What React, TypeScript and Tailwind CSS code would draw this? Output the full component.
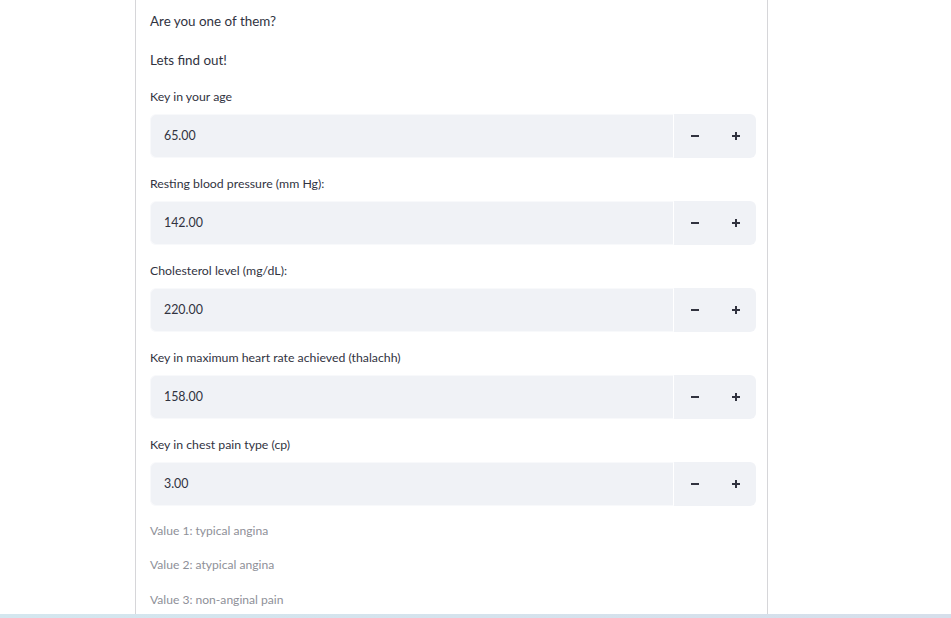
const fields = [
  { label: "Key in your age", value: "65.00" },
  { label: "Resting blood pressure (mm Hg):", value: "142.00" },
  { label: "Cholesterol level (mg/dL):", value: "220.00" },
  { label: "Key in maximum heart rate achieved (thalachh)", value: "158.00" },
  { label: "Key in chest pain type (cp)", value: "3.00" },
];

const notes = [
  "Value 1: typical angina",
  "Value 2: atypical angina",
  "Value 3: non-anginal pain",
];

function NumberField({ label, value }: { label: string; value: string }) {
  return (
    <div className="flex flex-col">
      <div className="h-[22px] flex items-center text-[12.3px] text-[#31333f]">{label}</div>
      <div className="mt-[6px] h-[44px] flex">
        <div className="flex-1 flex items-center rounded-l-md bg-[#f0f2f6] border border-[#f8f9fb] border-r-white pl-[13px] text-[12.4px] text-[#31333f]">
          {value}
        </div>
        <div className="w-[82px] flex rounded-r-md bg-[#f0f2f6]">
          <button className="w-[41px] flex items-center justify-center">
            <span className="block w-[8px] h-[2px] bg-[#31333f]" />
          </button>
          <button className="w-[41px] flex items-center justify-center">
            <span className="relative block w-[8px] h-[8px]">
              <span className="absolute left-0 top-[3px] w-[8px] h-[2px] bg-[#31333f]" />
              <span className="absolute top-0 left-[3px] w-[2px] h-[8px] bg-[#31333f]" />
            </span>
          </button>
        </div>
      </div>
    </div>
  );
}

export default function App() {
  return (
    <div className="h-[618px] w-full flex flex-col bg-white overflow-hidden font-['Lato','Liberation_Sans',sans-serif]">
      <div className="flex-1 flex">
        <div className="ml-[135px] w-[633px] border-l border-r border-[#d6d6d9] pl-[14px] pr-[11px]">
          <div className="mt-[10px] h-[22px] flex items-center text-[13.4px] text-[#31333f]">Are you one of them?</div>
          <div className="mt-[17px] h-[22px] flex items-center text-[13.4px] text-[#31333f]">Lets find out!</div>
          <div className="mt-[15px] flex flex-col gap-[15px]">
            {fields.map((f) => (
              <NumberField key={f.label} label={f.label} value={f.value} />
            ))}
          </div>
          <div className="mt-[14px] flex flex-col gap-[12.5px]">
            {notes.map((n) => (
              <div key={n} className="h-[22px] flex items-center text-[12.1px] text-[#8e9098]">{n}</div>
            ))}
          </div>
        </div>
      </div>
      <div className="h-[4px] bg-gradient-to-r from-[#d4e7ef] to-[#d6dfeb]" />
    </div>
  );
}
